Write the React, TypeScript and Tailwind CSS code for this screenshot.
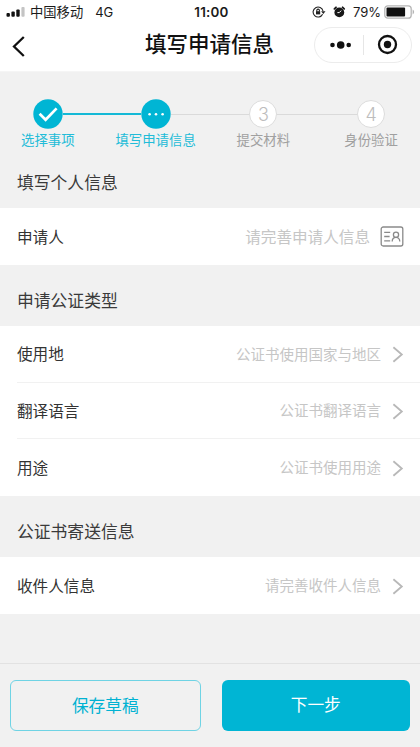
import type { ReactNode } from 'react';
import clsx from 'clsx';

interface Step {
  label: string;
  status: 'done' | 'current' | 'todo';
}

interface Field {
  label: string;
  placeholder: string;
  idCard?: boolean;
}

interface Section {
  title: string;
  fields: Field[];
}

const steps: Step[] = [
  { label: '选择事项', status: 'done' },
  { label: '填写申请信息', status: 'current' },
  { label: '提交材料', status: 'todo' },
  { label: '身份验证', status: 'todo' },
];

const sections: Section[] = [
  {
    title: '填写个人信息',
    fields: [{ label: '申请人', placeholder: '请完善申请人信息', idCard: true }],
  },
  {
    title: '申请公证类型',
    fields: [
      { label: '使用地', placeholder: '公证书使用国家与地区' },
      { label: '翻译语言', placeholder: '公证书翻译语言' },
      { label: '用途', placeholder: '公证书使用用途' },
    ],
  },
  {
    title: '公证书寄送信息',
    fields: [{ label: '收件人信息', placeholder: '请完善收件人信息' }],
  },
];

// 顶部系统状态栏
function StatusBar() {
  return (
    <div className="grid h-[22px] grid-cols-3 items-center pt-px text-[13.3px] leading-[22px] text-[#1a1a1a]">
      <div className="flex items-center pl-[6px]">
        <svg width="20" height="10" viewBox="0 0 20 10" fill="#111">
          <rect x="0.5" y="6" width="3.4" height="3.8" rx="1" />
          <rect x="5.4" y="4.4" width="3.4" height="5.4" rx="1" />
          <rect x="10.3" y="2.4" width="3.4" height="7.4" rx="1" />
          <rect x="15.4" y="0" width="3.2" height="9.8" rx="1" fill="#c4c4c4" />
        </svg>
        <span className="ml-[4px]">中国移动</span>
        <span className="ml-[12px] text-[13px]">4G</span>
      </div>
      <div className="pl-[3px] text-center text-[13.4px] font-semibold tracking-[0.2px]">11:00</div>
      <div className="flex items-center justify-end pr-[5px]">
        <svg width="14" height="12" viewBox="0 0 14 12" fill="none" stroke="#222" strokeWidth="1.1">
          <path d="M10.6 8.2A5 5 0 1 1 11 5" />
          <path d="M9.1 5.2h4.4l-2.2 2.8z" fill="#222" stroke="none" />
          <rect x="4" y="5.2" width="4.2" height="3.2" fill="#222" stroke="none" />
          <path d="M4.8 5.4V4.4a1.3 1.3 0 0 1 2.6 0v1" />
        </svg>
        <svg className="ml-[7px]" width="13" height="12" viewBox="0 0 13 12" fill="#181818">
          <circle cx="6.3" cy="6.4" r="4.9" />
          <path d="M1.4 2.8 3 1.3M9.6 1.3l1.6 1.5" stroke="#181818" strokeWidth="1.8" strokeLinecap="round" />
          <path d="M6.3 6.6 8.2 4.6M6.3 6.6H4.4" stroke="#fff" strokeWidth="1" />
        </svg>
        <span className="ml-[7px] text-[13px]">79%</span>
        <svg className="ml-[3px]" width="31" height="14" viewBox="0 0 31 14" fill="none">
          <rect x="0.8" y="0.8" width="26.4" height="12.4" rx="3" stroke="#b5b5b5" strokeWidth="1.3" />
          <rect x="2.5" y="2.6" width="18.6" height="8.8" rx="1" fill="#111" />
          <path d="M28.6 4.6c2 .8 2 4 0 4.8z" fill="#b5b5b5" />
        </svg>
      </div>
    </div>
  );
}

function NavBar() {
  return (
    <div className="grid h-[50px] grid-cols-[105px_1fr_106px] items-center border-b border-[#f5f5f5] pb-[4px]">
      <svg className="ml-[12px] mt-[3px]" width="14" height="21" viewBox="0 0 14 21" fill="none" stroke="#111" strokeWidth="2.3">
        <path d="M11.8 1 2 10.5l9.8 9.5" />
      </svg>
      <h1 className="text-center text-[21.5px] font-medium text-[#111]">填写申请信息</h1>
      {/* 小程序胶囊按钮 */}
      <div className="flex h-[36px] w-[98px] items-center rounded-full border border-[#ececec]">
        <svg className="ml-[14px]" width="23" height="10" viewBox="0 0 23 10" fill="#111">
          <circle cx="3.5" cy="5" r="2.3" />
          <circle cx="11.7" cy="5" r="3.8" />
          <circle cx="19.7" cy="5" r="2.3" />
        </svg>
        <span className="ml-[11px] h-[20px] w-px bg-[#e6e6e6]" />
        <svg className="ml-[13px]" width="21" height="21" viewBox="0 0 21 21">
          <circle cx="10.5" cy="10.5" r="8.5" fill="none" stroke="#111" strokeWidth="2.3" />
          <circle cx="10.5" cy="10.5" r="3.7" fill="#111" />
        </svg>
      </div>
    </div>
  );
}

function StepIcon({ step, index }: { step: Step; index: number }) {
  if (step.status === 'todo') {
    return (
      <span className="flex size-[28px] items-center justify-center rounded-full border border-[#dcdcdc] bg-white text-[18px] font-light text-[#bdbdbd]">
        {index + 1}
      </span>
    );
  }
  return (
    <svg className="size-[30px]" viewBox="0 0 30 30" fill="none">
      <circle cx="15" cy="15" r="14.7" fill="#00b5d4" />
      {step.status === 'done' ? (
        <path d="m6.6 14.8 6 6L23.6 9.4" stroke="#fff" strokeWidth="2.7" />
      ) : (
        <g fill="#fff">
          <circle cx="8.6" cy="15.2" r="1.3" />
          <circle cx="15" cy="15.2" r="1.3" />
          <circle cx="21.6" cy="15.2" r="1.3" />
        </g>
      )}
    </svg>
  );
}

function Steps() {
  return (
    <div className="-ml-[6px] flex w-[431px] pt-[27px]">
      {steps.map((step, index) => (
        <div key={step.label} className="flex flex-1 flex-col items-center">
          <div className="flex h-[30px] w-full items-center">
            <Line hidden={index === 0} active={index === 1} />
            <StepIcon step={step} index={index} />
            <Line hidden={index === steps.length - 1} active={index === 0} />
          </div>
          <span
            className={clsx(
              'mt-[1px] text-[13.4px] leading-[20px]',
              step.status === 'todo' ? 'text-[#a0a0a0]' : 'text-[#22bcd8]'
            )}
          >
            {step.label}
          </span>
        </div>
      ))}
    </div>
  );
}

function Line({ hidden, active }: { hidden: boolean; active: boolean }) {
  return (
    <span
      className={clsx(
        'flex-1',
        hidden && 'invisible',
        active ? 'h-[2px] bg-[#14b9d6]' : 'h-px bg-[#dadada]'
      )}
    />
  );
}

function IdCardIcon() {
  return (
    <svg className="-mt-[2px] ml-[10px]" width="24" height="21" viewBox="0 0 24 21" fill="none" stroke="#8a8a8a" strokeWidth="1.3">
      <rect x="1.2" y="1" width="21.6" height="19" rx="2" />
      <path d="M4.2 6.3h6M4.2 10.5h5.4M4.2 14.8h6" />
      <circle cx="16" cy="8.8" r="2.6" />
      <path d="M12.2 15.6c0-5.6 7.6-5.6 7.6 0" />
    </svg>
  );
}

function ArrowIcon() {
  return (
    <svg className="ml-[11px]" width="12" height="17" viewBox="0 0 12 17" fill="none" stroke="#b8b8b8" strokeWidth="1.8">
      <path d="m1.4 1.3 8.4 7.2-8.4 7.2" />
    </svg>
  );
}

function FieldRow({ field, last }: { field: Field; last: boolean }) {
  return (
    <div className="bg-white pl-[17px]">
      <div
        className={clsx(
          'flex h-[56.5px] items-center pt-[2px] pr-[16px]',
          !last && 'border-b border-[#f1f1f1]'
        )}
      >
        <span className="flex-1 text-[15.6px] text-[#333]">{field.label}</span>
        <span className={clsx('text-[#c6c6c6]', field.idCard ? 'text-[15.6px]' : 'text-[14.5px]')}>
          {field.placeholder}
        </span>
        {field.idCard ? <IdCardIcon /> : <ArrowIcon />}
      </div>
    </div>
  );
}

function SectionTitle({ children }: { children: ReactNode }) {
  return (
    <h2 className="flex h-[61.5px] items-end pb-[13px] pl-[17px] text-[16.8px] leading-[24px] text-[#3a3a3a]">
      {children}
    </h2>
  );
}

export default function App() {
  return (
    <div className="flex h-[747px] w-[420px] flex-col overflow-hidden bg-[#f1f1f1] font-['Inter','Noto_Sans_CJK_SC',sans-serif]">
      <header className="bg-white">
        <StatusBar />
        <NavBar />
      </header>

      <main className="flex-1">
        <div className="h-[74.5px]">
          <Steps />
        </div>
        {sections.map(section => (
          <section key={section.title}>
            <SectionTitle>{section.title}</SectionTitle>
            {section.fields.map((field, index) => (
              <FieldRow
                key={field.label}
                field={field}
                last={index === section.fields.length - 1}
              />
            ))}
          </section>
        ))}
      </main>

      {/* 底部操作栏 */}
      <footer className="flex h-[84px] gap-[21px] border-t border-[#e2e2e2] px-[10px] pt-[16px]">
        <button className="h-[51px] flex-1 rounded-[6px] border border-[#6fd3e4] pt-[2px] text-[16.7px] text-[#00b2d2]">
          保存草稿
        </button>
        <button className="h-[51px] flex-1 rounded-[6px] bg-[#00b5d4] text-[16.7px] text-white">
          下一步
        </button>
      </footer>
    </div>
  );
}
